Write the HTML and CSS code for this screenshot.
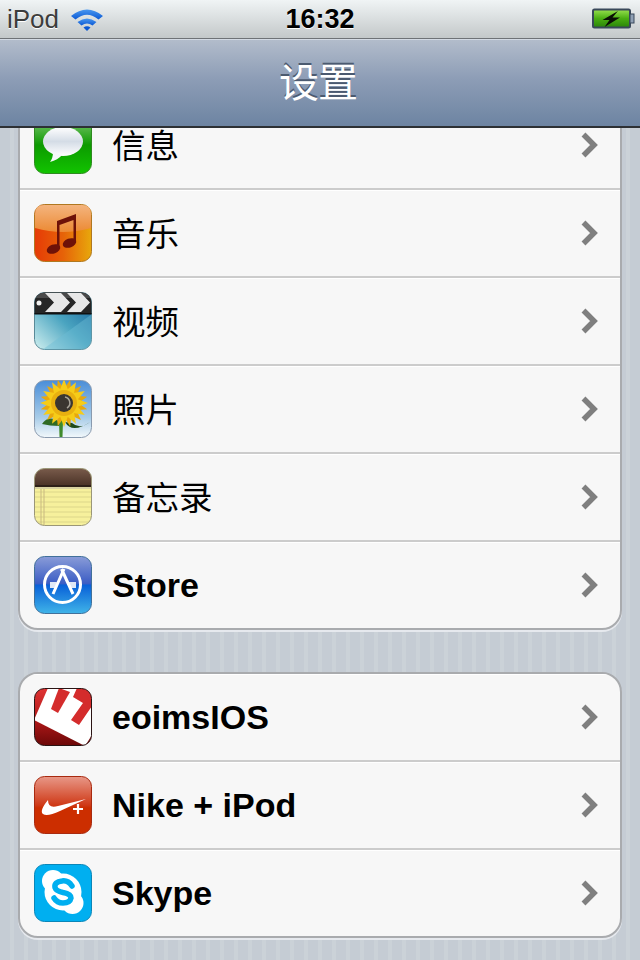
FILE: index.html
```html
<!DOCTYPE html>
<html lang="zh">
<head>
<meta charset="utf-8">
<title>设置</title>
<link rel="stylesheet" href="styles.css">
</head>
<body>
<div class="status">
  <div class="status-left">
    <span class="carrier">iPod</span>
    <svg class="wifi" width="34" height="24" viewBox="0 0 34 24">
      <defs><linearGradient id="wf" x1="0" y1="0" x2="0" y2="1"><stop offset="0" stop-color="#4a98f0"/><stop offset="1" stop-color="#0a58d4"/></linearGradient></defs>
      <path d="M17 24 L13.500 20.500 Q17 18 20.500 20.500Z" fill="#0a58d4"/>
      <path d="M11.500 18.500 L7.500 15 Q17 8 26.500 15 L22.500 18.500 Q17 14.500 11.500 18.500Z" fill="url(#wf)"/>
      <path d="M5.500 12.500 L1 9 Q17 -4 33 9 L28.500 12.500 Q17 3 5.500 12.500Z" fill="url(#wf)"/>
    </svg>
  </div>
  <span class="clock">16:32</span>
  <svg class="battery" width="44" height="22" viewBox="0 0 44 22">
    <defs>
      <linearGradient id="bat" x1="0" y1="0" x2="0" y2="1"><stop offset="0" stop-color="#98e050"/><stop offset=".5" stop-color="#4aae12"/><stop offset="1" stop-color="#2a840a"/></linearGradient>
    </defs>
    <rect x="1" y="1.500" width="37" height="18" rx="1.500" fill="url(#bat)" stroke="#39485a" stroke-width="2"/>
    <rect x="38" y="6" width="4" height="9" fill="#8fa0b5" stroke="#39485a"/>
    <path d="M26 3 L10.500 12 L17.500 12 L12.500 19 L28 9.500 L20.500 9.500Z" fill="#0a0f05"/>
  </svg>
</div>
<header class="navbar"><h1 class="title">设置</h1></header>
<main class="scroller">
  <section class="group group-first">
    <div class="row">
      <svg class="icon" viewBox="0 0 58 58"><defs><linearGradient id="g1" x1="0" y1="0" x2="0" y2="1"><stop offset="0" stop-color="#86c878"/><stop offset=".5" stop-color="#0c9a00"/><stop offset="1" stop-color="#12c400"/></linearGradient><linearGradient id="g1b" x1="0" y1="0" x2="0" y2="1"><stop offset="0" stop-color="#fff"/><stop offset=".5" stop-color="#d4dce6"/><stop offset="1" stop-color="#fff"/></linearGradient></defs><rect x=".5" y=".5" width="57" height="57" rx="10" fill="url(#g1)" stroke="#2f8a20"/><ellipse cx="29" cy="25.500" rx="20" ry="14.500" fill="url(#g1b)"/><path d="M19 36 Q19 42 16 46 Q24 44 28 39Z" fill="#f6f8fa"/></svg>
      <span class="label cjk">信息</span><svg class="chev" width="20" height="28" viewBox="0 0 20 28"><path d="M3.500 3.500 L14 14 L3.500 24.500" fill="none" stroke="#7f7f7f" stroke-width="5.500"/></svg>
    </div>
    <div class="row">
      <svg class="icon" viewBox="0 0 58 58"><defs><linearGradient id="g2" x1="0" y1="1" x2="1" y2="1"><stop offset="0" stop-color="#e63a06"/><stop offset=".5" stop-color="#e66208"/><stop offset="1" stop-color="#e8a80c"/></linearGradient><linearGradient id="g2b" x1="0" y1="0" x2="0" y2="1"><stop offset="0" stop-color="#f4b47e"/><stop offset="1" stop-color="#ec8a34"/></linearGradient></defs><rect x=".5" y=".5" width="57" height="57" rx="10" fill="url(#g2)" stroke="#b07820"/><path d="M1 10 Q1 1 10 1 H48 Q57 1 57 10 V24 Q29 32 1 24Z" fill="url(#g2b)"/><path d="M23 17 L42 10 V39 H39.500 V16 L25.500 21 V45 H23Z" fill="#6e1208"/><ellipse cx="19.500" cy="45" rx="7" ry="4.500" transform="rotate(-20 19.500 45)" fill="#6e1208"/><ellipse cx="35.500" cy="39" rx="7" ry="4.500" transform="rotate(-20 35.500 39)" fill="#6e1208"/></svg>
      <span class="label cjk">音乐</span><svg class="chev" width="20" height="28" viewBox="0 0 20 28"><path d="M3.500 3.500 L14 14 L3.500 24.500" fill="none" stroke="#7f7f7f" stroke-width="5.500"/></svg>
    </div>
    <div class="row">
      <svg class="icon" viewBox="0 0 58 58"><defs><linearGradient id="g3" x1="1" y1="0" x2="0" y2="1"><stop offset="0" stop-color="#14609a"/><stop offset=".5" stop-color="#4aa4c0"/><stop offset="1" stop-color="#d0f0f0"/></linearGradient><clipPath id="c3"><rect x=".5" y=".5" width="57" height="57" rx="10"/></clipPath></defs><rect x=".5" y=".5" width="57" height="57" rx="10" fill="url(#g3)" stroke="#5a8a98"/><g clip-path="url(#c3)"><path d="M8 58 L58 22 V58Z" fill="#6cbcd4" opacity=".45"/><rect x="0" y="0" width="58" height="22" fill="#262626"/><rect x="0" y="0" width="58" height="6" fill="#4a4a4a"/><path d="M11 1 H27 L36 10.500 L27 20 H11 L20 10.500Z M33 1 H47 L56 10.500 L47 20 H33 L42 10.500Z" fill="#e8e8e8"/><rect x="0" y="21" width="58" height="1.500" fill="#111"/></g><circle cx="5" cy="11" r="2.500" fill="#f0f0f0"/></svg>
      <span class="label cjk">视频</span><svg class="chev" width="20" height="28" viewBox="0 0 20 28"><path d="M3.500 3.500 L14 14 L3.500 24.500" fill="none" stroke="#7f7f7f" stroke-width="5.500"/></svg>
    </div>
    <div class="row">
      <svg class="icon" viewBox="0 0 58 58"><defs><linearGradient id="g4" x1="0" y1="0" x2="0" y2="1"><stop offset="0" stop-color="#4a8ed8"/><stop offset=".65" stop-color="#a8cce8"/><stop offset="1" stop-color="#f2f8fb"/></linearGradient><clipPath id="c4"><rect x=".5" y=".5" width="57" height="57" rx="10"/></clipPath><path id="pt" d="M30 -1 L35.500 14 H24.500Z"/></defs><rect x=".5" y=".5" width="57" height="57" rx="10" fill="url(#g4)" stroke="#8a9aae"/><g clip-path="url(#c4)"><path d="M25 40 L25.500 57 H28.500 L29 40Z" fill="#3f8a2c"/><path d="M26 42 Q14 34 8 44 Q16 46 25 46Z" fill="#2f6a24"/><path d="M31 42 Q38 54 56 42 Q46 50 38 43Z" fill="#1e4a1a"/><g fill="#e8a80c"><use href="#pt" transform="rotate(15 30 23)"/><use href="#pt" transform="rotate(45 30 23)"/><use href="#pt" transform="rotate(75 30 23)"/><use href="#pt" transform="rotate(105 30 23)"/><use href="#pt" transform="rotate(135 30 23)"/><use href="#pt" transform="rotate(165 30 23)"/><use href="#pt" transform="rotate(195 30 23)"/><use href="#pt" transform="rotate(225 30 23)"/><use href="#pt" transform="rotate(255 30 23)"/><use href="#pt" transform="rotate(285 30 23)"/><use href="#pt" transform="rotate(315 30 23)"/><use href="#pt" transform="rotate(345 30 23)"/></g><g fill="#f6cc18"><use href="#pt"/><use href="#pt" transform="rotate(30 30 23)"/><use href="#pt" transform="rotate(60 30 23)"/><use href="#pt" transform="rotate(90 30 23)"/><use href="#pt" transform="rotate(120 30 23)"/><use href="#pt" transform="rotate(150 30 23)"/><use href="#pt" transform="rotate(180 30 23)"/><use href="#pt" transform="rotate(210 30 23)"/><use href="#pt" transform="rotate(240 30 23)"/><use href="#pt" transform="rotate(270 30 23)"/><use href="#pt" transform="rotate(300 30 23)"/><use href="#pt" transform="rotate(330 30 23)"/></g><circle cx="30" cy="23" r="13" fill="#e8b010"/><circle cx="30" cy="23" r="9" fill="#3a3630"/><path d="M31 17 A6 6 0 0 1 33 28" fill="none" stroke="#a8a498" stroke-width="1.500"/></g></svg>
      <span class="label cjk">照片</span><svg class="chev" width="20" height="28" viewBox="0 0 20 28"><path d="M3.500 3.500 L14 14 L3.500 24.500" fill="none" stroke="#7f7f7f" stroke-width="5.500"/></svg>
    </div>
    <div class="row">
      <svg class="icon" viewBox="0 0 58 58"><defs><linearGradient id="g5" x1="0" y1="0" x2="0" y2="1"><stop offset="0" stop-color="#7a5c4c"/><stop offset="1" stop-color="#4c3428"/></linearGradient><clipPath id="c5"><rect x=".5" y=".5" width="57" height="57" rx="10"/></clipPath></defs><g clip-path="url(#c5)"><rect width="58" height="58" fill="#f6f09c"/><g stroke="#dcd68a" stroke-width="1"><path d="M0 24H58M0 29H58M0 34H58M0 39H58M0 44H58M0 49H58M0 54H58"/></g><path d="M7 19V58M10 19V58" stroke="#c8b880" stroke-width="1"/><rect width="58" height="17" fill="url(#g5)"/><rect y="17" width="58" height="2" fill="#2e2018"/><rect y="19" width="58" height="2" fill="#d8d2a0"/></g><rect x=".5" y=".5" width="57" height="57" rx="10" fill="none" stroke="#9a9678"/></svg>
      <span class="label cjk">备忘录</span><svg class="chev" width="20" height="28" viewBox="0 0 20 28"><path d="M3.500 3.500 L14 14 L3.500 24.500" fill="none" stroke="#7f7f7f" stroke-width="5.500"/></svg>
    </div>
    <div class="row">
      <svg class="icon" viewBox="0 0 58 58"><defs><linearGradient id="g6" x1="0" y1="0" x2="0" y2="1"><stop offset="0" stop-color="#8a9cd8"/><stop offset=".48" stop-color="#3a5cc4"/><stop offset=".5" stop-color="#0860d8"/><stop offset="1" stop-color="#40b4e8"/></linearGradient></defs><rect x=".5" y=".5" width="57" height="57" rx="10" fill="url(#g6)" stroke="#41709a"/><circle cx="28.500" cy="28.500" r="18" fill="none" stroke="#fff" stroke-width="3"/><path d="M16 26H23L21 32H16Z M34 26H42V32H36Z" fill="#dfe8f6"/><path d="M30 13 L19 38 M27.500 13 L39 38" fill="none" stroke="#fff" stroke-width="3"/></svg>
      <span class="label">Store</span><svg class="chev" width="20" height="28" viewBox="0 0 20 28"><path d="M3.500 3.500 L14 14 L3.500 24.500" fill="none" stroke="#7f7f7f" stroke-width="5.500"/></svg>
    </div>
  </section>
  <section class="group">
    <div class="row">
      <svg class="icon" viewBox="0 0 58 58"><defs><linearGradient id="g7" x1="0" y1="0" x2="0" y2="1"><stop offset="0" stop-color="#e03434"/><stop offset=".55" stop-color="#b01818"/><stop offset="1" stop-color="#6a0808"/></linearGradient><clipPath id="c7"><rect x=".5" y=".5" width="57" height="57" rx="10"/></clipPath></defs><g clip-path="url(#c7)"><rect width="58" height="58" fill="url(#g7)"/><path d="M0 32 L14 0 H58 V47 L51 58Z" fill="#fff"/><path d="M25 0 L36 4 L24 25 L17 21Z" fill="#d42c2c"/><path d="M43 0 H58 V18 L45 37 L37 32 L49 15 L39 9Z" fill="#d42c2c"/></g><rect x=".5" y=".5" width="57" height="57" rx="10" fill="none" stroke="#2a1414"/></svg>
      <span class="label">eoimsIOS</span><svg class="chev" width="20" height="28" viewBox="0 0 20 28"><path d="M3.500 3.500 L14 14 L3.500 24.500" fill="none" stroke="#7f7f7f" stroke-width="5.500"/></svg>
    </div>
    <div class="row">
      <svg class="icon" viewBox="0 0 58 58"><defs><linearGradient id="g8" x1="0" y1="0" x2="0" y2="1"><stop offset="0" stop-color="#e89888"/><stop offset=".5" stop-color="#cf3a18"/><stop offset=".55" stop-color="#cc2e00"/><stop offset="1" stop-color="#cc2e00"/></linearGradient></defs><rect x=".5" y=".5" width="57" height="57" rx="10" fill="url(#g8)" stroke="#a82a10"/><path d="M14 24 Q5 35 9 38 Q13 41 26 35 L52 23 L24 30 Q14 33 14 24Z" fill="#fff"/><path d="M44 28V38M39 33H49" stroke="#fff" stroke-width="2.200"/></svg>
      <span class="label">Nike + iPod</span><svg class="chev" width="20" height="28" viewBox="0 0 20 28"><path d="M3.500 3.500 L14 14 L3.500 24.500" fill="none" stroke="#7f7f7f" stroke-width="5.500"/></svg>
    </div>
    <div class="row">
      <svg class="icon" viewBox="0 0 58 58"><rect x=".5" y=".5" width="57" height="57" rx="10" fill="#00aff0" stroke="#0a86b8"/><circle cx="29" cy="28" r="18.500" fill="#fff"/><circle cx="19" cy="17" r="11" fill="#fff"/><circle cx="38.500" cy="39" r="11" fill="#fff"/><path d="M38 22 Q34 16 28 17 Q20 18 21 23.500 Q22 27 29 28.500 Q37 30 37 34 Q36 39 29 39 Q23 39 20 34" fill="none" stroke="#00aff0" stroke-width="5.500" stroke-linecap="round"/></svg>
      <span class="label">Skype</span><svg class="chev" width="20" height="28" viewBox="0 0 20 28"><path d="M3.500 3.500 L14 14 L3.500 24.500" fill="none" stroke="#7f7f7f" stroke-width="5.500"/></svg>
    </div>
  </section>
</main>
</body>
</html>
```
FILE: styles.css
```css
html, body { margin: 0; padding: 0; }
body {
  width: 640px;
  height: 960px;
  overflow: hidden;
  font-family: "Liberation Sans", "Noto Sans CJK SC", sans-serif;
  background: #c5ccd4;
  display: flex;
  flex-direction: column;
}
.status {
  position: relative;
  flex: none;
  height: 39px;
  box-sizing: border-box;
  padding: 0 6px 0 7px;
  display: flex;
  align-items: center;
  justify-content: space-between;
  background: linear-gradient(#f0f4f5, #c3c8c9);
  border-bottom: 1px solid #6e7276;
}
.status-left { display: flex; align-items: center; gap: 11px; }
.carrier { font-size: 26px; color: #3c3c3c; text-shadow: 0 1px 0 #fff; font-weight: 400; }
.wifi { display: block; }
.clock {
  position: absolute;
  left: 0;
  right: 0;
  text-align: center;
  font-size: 27px;
  font-weight: 700;
  color: #000;
  text-shadow: 0 1px 0 #fff;
}
.battery { display: block; margin-right: -2px; }
.navbar {
  flex: none;
  height: 89px;
  box-sizing: border-box;
  padding: 0 4px 6px 0;
  display: flex;
  align-items: center;
  justify-content: center;
  background: linear-gradient(#b2bccb 0, #8d9db6 45%, #6d84a2 100%);
  border-top: 1px solid #d3dae3;
  border-bottom: 2px solid #2d3034;
}
.title {
  margin: 0;
  font-size: 40px;
  font-weight: 400;
  line-height: 1;
  color: #fff;
  text-shadow: 0 -2px 0 #4b5a70;
  font-family: "Noto Sans CJK SC", sans-serif;
  letter-spacing: -1px;
}
.scroller {
  flex: 1;
  overflow: hidden;
  padding: 0 18px;
  background: repeating-linear-gradient(90deg, #c5ccd4 0, #c5ccd4 10px, #cbd2d8 10px, #cbd2d8 14px);
}
.group {
  margin-bottom: 42px;
  background: #f7f7f7;
  border: 2px solid #a9abae;
  border-radius: 20px;
  box-shadow: 0 2px 0 #e6e9ee;
  overflow: hidden;
}
.group-first { margin-top: -28px; }
.row {
  height: 88px;
  box-sizing: border-box;
  padding: 0 20px 0 14px;
  display: flex;
  align-items: center;
  border-bottom: 2px solid #cccccc;
  box-shadow: inset 0 1px 0 #fff;
}
.row:last-child { border-bottom: 0; height: 86px; }
.icon { flex: none; width: 58px; height: 58px; display: block; }
.label {
  flex: 1;
  margin-left: 20px;
  font-size: 34px;
  line-height: 1;
  font-weight: 700;
  color: #000;
}
.cjk { font-family: "Noto Sans CJK SC", sans-serif; font-size: 33.5px; font-weight: 400; padding-bottom: 2px; }
.chev { flex: none; display: block; }
```
